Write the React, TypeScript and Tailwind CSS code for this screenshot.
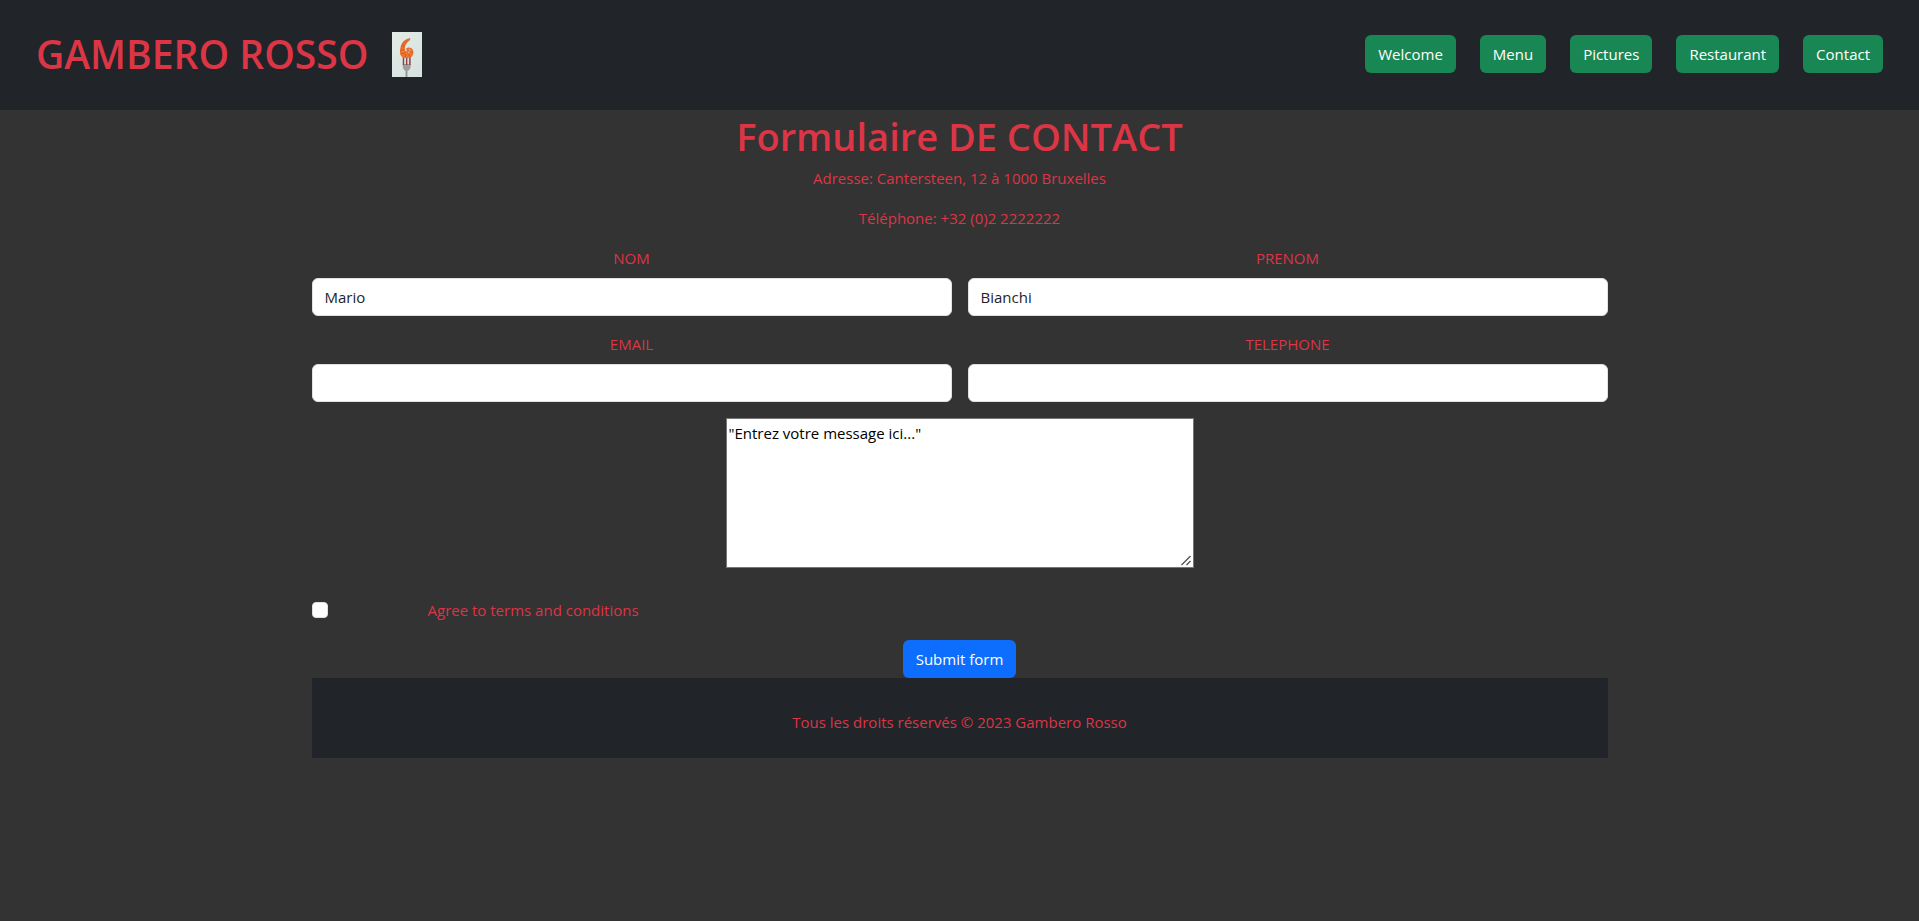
const navItems = ["Welcome", "Menu", "Pictures", "Restaurant", "Contact"];

function Logo() {
  return (
    <svg width="30" height="45" viewBox="0 0 30 45" role="img" aria-label="Gambero Rosso logo">
      <defs>
        <linearGradient id="paper" x1="0" y1="0" x2="1" y2="1">
          <stop offset="0" stopColor="#e3ebe4" />
          <stop offset="1" stopColor="#d6e2e0" />
        </linearGradient>
        <linearGradient id="shrimp" x1="0" y1="0" x2="0" y2="1">
          <stop offset="0" stopColor="#dc6a35" />
          <stop offset="1" stopColor="#f0762e" />
        </linearGradient>
      </defs>
      <rect width="30" height="45" fill="url(#paper)" />
      <path d="M13.6 38h1.800v7h-1.800z" fill="#8f9494" />
      <path d="M10.800 32h7.800v2.500c0 2-1 3.200-2.500 4.200h-3c-1.400-1-2.300-2.200-2.300-4.200z" fill="#9ba09f" />
      <path d="M11.500 25v8M14.700 25v8M17.900 25v8" stroke="#8e3f46" strokeWidth="1.500" />
      <path d="M13.100 26v6M16.300 26v6" stroke="#dcd8d6" strokeWidth="1" />
      <path
        d="M18.600 6C14.500 6.600 11 8.500 9.600 12C8 15.500 7.400 21 8.800 23.500C10.500 26.500 17.500 27 20 24.600C22.200 22.200 21.900 17.500 19.200 15.900C17 14.900 14.800 15.400 13.600 17C14.300 17.400 14.900 18.200 14.600 19.200C13.400 19.800 12.600 18 12.900 15.600C13.200 12.600 15 10.500 17.600 8.400Z"
        fill="url(#shrimp)"
      />
      <path d="M9.500 13.500l3 1M8.500 18l3.800.2M9 22l3.500-1.300M13 25.300l.8-2.800M18 24.800l-1.200-2.600M21 20.500l-3-.8" stroke="#c9501f" strokeWidth="0.700" />
      <path d="M15.800 20.500l2.500-.5M10.500 20l1-1M16.800 17.500l2 .8" stroke="#f9ad78" strokeWidth="1" />
    </svg>
  );
}

function Field({ id, label, type, value }: { id: string; label: string; type: string; value?: string }) {
  return (
    <div className="flex flex-col gap-2">
      <label htmlFor={id} className="text-center">
        {label}
      </label>
      <input
        id={id}
        type={type}
        defaultValue={value}
        className="h-[38px] w-full rounded-md border border-[#dee2e6] bg-white px-3 text-[#212529]"
      />
    </div>
  );
}

export default function App() {
  return (
    <div className="min-h-screen bg-[#333333] font-['Open_Sans','Noto_Sans',sans-serif] text-[15px] leading-6 text-[#dc3545]">
      <header className="flex flex-wrap items-center justify-between gap-6 bg-[#212529] px-9 pt-[30px] pb-8">
        <div className="flex items-center gap-6">
          <h1 className="text-[39px] leading-[48px] font-semibold">GAMBERO ROSSO</h1>
          <Logo />
        </div>
        <nav className="flex flex-wrap gap-6">
          {navItems.map((item) => (
            <a key={item} href="#" className="rounded-md bg-[#198754] px-[13px] py-[7px] text-white">
              {item}
            </a>
          ))}
        </nav>
      </header>

      <main className="mx-auto max-w-[1320px] px-3">
        <h2 className="pt-0.5 pb-1.5 text-center text-[38px] leading-[48px] font-semibold">Formulaire DE CONTACT</h2>
        <p className="mb-4 text-center">Adresse: Cantersteen, 12 à 1000 Bruxelles</p>
        <p className="mb-4 text-center">Téléphone: +32 (0)2 2222222</p>

        <form onSubmit={(event) => event.preventDefault()}>
          <div className="grid grid-cols-2 gap-4">
            <Field id="nom" label="NOM" type="text" value="Mario" />
            <Field id="prenom" label="PRENOM" type="text" value="Bianchi" />
            <Field id="email" label="EMAIL" type="email" />
            <Field id="telephone" label="TELEPHONE" type="tel" />
          </div>
          <div className="relative mx-auto mt-4 w-fit max-w-full">
            <textarea
              aria-label="Message"
              defaultValue={'"Entrez votre message ici..."'}
              className="block h-[150px] w-[468px] max-w-full resize border border-[#767676] bg-white p-0.5 text-black"
            />
            <svg
              width="14"
              height="14"
              viewBox="0 0 14 14"
              aria-hidden="true"
              className="pointer-events-none absolute right-px bottom-px bg-white"
            >
              <path d="M2.500 12L11.500 3M7.500 12L11.500 8" stroke="#555555" strokeWidth="1.400" />
            </svg>
          </div>
          <div className="mt-[30px] flex items-center gap-[100px]">
            <input
              id="terms"
              type="checkbox"
              className="size-4 appearance-none rounded border border-[#dee2e6] bg-white checked:bg-[#0d6efd]"
            />
            <label htmlFor="terms">Agree to terms and conditions</label>
          </div>
          <button type="submit" className="mx-auto mt-[18px] block rounded-md bg-[#0d6efd] px-[13px] py-[7px] text-white">
            Submit form
          </button>
        </form>

        <footer className="bg-[#212529] pt-8 pb-6 text-center">
          <p>Tous les droits réservés © 2023 Gambero Rosso</p>
        </footer>
      </main>
    </div>
  );
}
